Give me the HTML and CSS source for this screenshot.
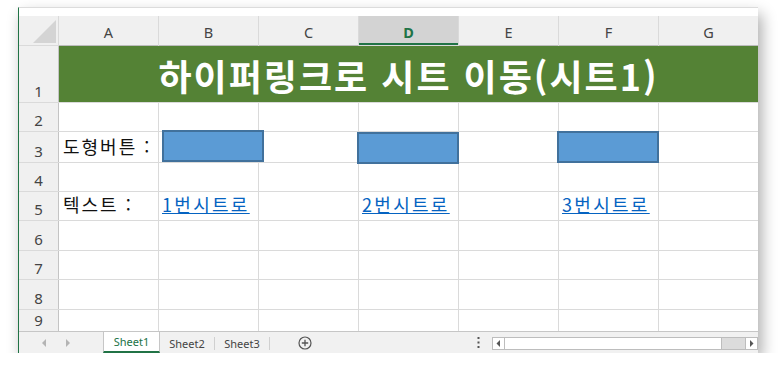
FILE: index.html
```html
<!DOCTYPE html>
<html lang="ko">
<head>
    <meta charset="UTF-8">
    <title>하이퍼링크로 시트 이동</title>
    <link rel="stylesheet" href="styles.css">
</head>
<body>

<div class="window">
    <div class="top-gap"></div>

    <!-- 시트 격자 -->
    <div class="sheet">
        <div class="corner">
            <svg width="39" height="29" viewBox="0 0 39 29"><polygon points="14,27 37,4 37,27" fill="#d4d4d4"/></svg>
        </div>
        <div class="col-head">A</div>
        <div class="col-head">B</div>
        <div class="col-head">C</div>
        <div class="col-head selected">D</div>
        <div class="col-head">E</div>
        <div class="col-head">F</div>
        <div class="col-head">G</div>

        <div class="row-head">1</div>
        <div class="title">하이퍼링크로 시트 이동(시트1)</div>

        <div class="row-head">2</div>
        <div class="cell"></div><div class="cell"></div><div class="cell"></div><div class="cell"></div><div class="cell"></div><div class="cell"></div><div class="cell"></div>

        <div class="row-head">3</div>
        <div class="cell label">도형버튼 :</div><div class="cell"></div><div class="cell"></div><div class="cell"></div><div class="cell"></div><div class="cell"></div><div class="cell"></div>

        <div class="row-head">4</div>
        <div class="cell"></div><div class="cell"></div><div class="cell"></div><div class="cell"></div><div class="cell"></div><div class="cell"></div><div class="cell"></div>

        <div class="row-head">5</div>
        <div class="cell label">텍스트 :</div>
        <div class="cell"><a class="link" href="#">1번시트로</a></div>
        <div class="cell"></div>
        <div class="cell"><a class="link" href="#">2번시트로</a></div>
        <div class="cell"></div>
        <div class="cell"><a class="link" href="#">3번시트로</a></div>
        <div class="cell"></div>

        <div class="row-head">6</div>
        <div class="cell"></div><div class="cell"></div><div class="cell"></div><div class="cell"></div><div class="cell"></div><div class="cell"></div><div class="cell"></div>

        <div class="row-head">7</div>
        <div class="cell"></div><div class="cell"></div><div class="cell"></div><div class="cell"></div><div class="cell"></div><div class="cell"></div><div class="cell"></div>

        <div class="row-head">8</div>
        <div class="cell"></div><div class="cell"></div><div class="cell"></div><div class="cell"></div><div class="cell"></div><div class="cell"></div><div class="cell"></div>

        <div class="row-head">9</div>
        <div class="cell"></div><div class="cell"></div><div class="cell"></div><div class="cell"></div><div class="cell"></div><div class="cell"></div><div class="cell"></div>

        <!-- 도형 버튼 (셀 위에 떠 있음) -->
        <div class="shape shape-1"></div>
        <div class="shape shape-2"></div>
        <div class="shape shape-3"></div>
    </div>

    <!-- 시트 탭 -->
    <div class="tab-bar">
        <div class="nav">
            <svg width="6" height="8" viewBox="0 0 6 8"><polygon points="5,0 5,8 1,4" fill="#b4b4b4"/></svg>
            <svg width="6" height="8" viewBox="0 0 6 8"><polygon points="1,0 1,8 5,4" fill="#b4b4b4"/></svg>
        </div>
        <div class="tab active">Sheet1</div>
        <div class="tab">Sheet2</div>
        <div class="tab">Sheet3</div>
        <div class="add">
            <svg width="14" height="14" viewBox="0 0 14 14"><circle cx="7" cy="7" r="6" fill="none" stroke="#555" stroke-width="1.2"/><path d="M7 3.8v6.4M3.8 7h6.4" stroke="#555" stroke-width="1.3"/></svg>
        </div>
        <div class="dots">
            <svg width="3" height="11" viewBox="0 0 3 11"><rect x="0.5" y="0" width="2" height="2" fill="#555"/><rect x="0.5" y="4.5" width="2" height="2" fill="#555"/><rect x="0.5" y="9" width="2" height="2" fill="#555"/></svg>
        </div>
        <div class="scrollbar">
            <div class="sb-btn">
                <svg width="5" height="7" viewBox="0 0 5 7"><polygon points="4,0 4,7 0.5,3.5" fill="#555"/></svg>
            </div>
            <div class="sb-thumb"></div>
            <div class="sb-track"></div>
            <div class="sb-btn">
                <svg width="5" height="7" viewBox="0 0 5 7"><polygon points="1,0 1,7 4.5,3.5" fill="#555"/></svg>
            </div>
        </div>
    </div>
</div>

</body>
</html>
```

FILE: styles.css
```css
body {
    margin: 0;
    background-color: #fff;
    font-family: "Noto Sans", "Noto Sans CJK KR", sans-serif;
}
.window {
    margin: 7px 0 0 18px;
    width: 739px;
    height: 345px;
    border-left: 1px solid #217346;
    border-top: 1px solid #dcdcdc;
    background-color: #fff;
    box-shadow: 4px 7px 14px rgba(0,0,0,0.32);
    overflow: hidden;
    display: flex;
    flex-direction: column;
}
.top-gap {
    height: 8px;
    flex: none;
}
.sheet {
    position: relative;
    flex: none;
    height: 315px;
    overflow: hidden;
    display: grid;
    grid-template-columns: 39px repeat(7, 99px);
    grid-template-rows: 29px 56px 28px 30px 28px 28px 29px 28px 29px 21px;
    gap: 1px;
    background-color: #dadada;
}
.corner {
    background-color: #f0f0f0;
}
.corner svg {
    display: block;
}
.col-head {
    background-color: #f0f0f0;
    box-shadow: 0 1px 0 #bcbcbc;
    color: #444;
    font-size: 14.5px;
    display: flex;
    align-items: center;
    justify-content: center;
    padding-top: 2px;
}
.col-head.selected {
    background-color: #d3d3d3;
    box-shadow: inset 0 -2px 0 #217346;
    color: #217346;
    font-weight: bold;
}
.row-head {
    background-color: #f0f0f0;
    box-shadow: 1px 0 0 #c4c4c4;
    color: #444;
    font-size: 15px;
    display: flex;
    align-items: flex-end;
    justify-content: center;
    padding-bottom: 1px;
}
.title {
    grid-column: 2 / span 7;
    background-color: #548235;
    color: #fff;
    font-family: "Noto Sans CJK KR", sans-serif;
    font-weight: bold;
    font-size: 36px;
    letter-spacing: 2px;
    display: flex;
    align-items: center;
    justify-content: center;
    padding-top: 1px;
}
.cell {
    background-color: #fff;
    display: flex;
    align-items: flex-end;
    padding: 0 0 3px 3px;
    font-family: "Noto Sans CJK KR", sans-serif;
    font-size: 18px;
    letter-spacing: 2px;
    color: #111;
    white-space: nowrap;
}
.cell.label {
    padding-left: 4px;
}
.link {
    color: #0563c1;
    text-decoration: underline;
    letter-spacing: 2.3px;
}
.shape {
    position: absolute;
    width: 102px;
    height: 32px;
    box-sizing: border-box;
    background-color: #5b9bd5;
    border: 2px solid #41719c;
}
.shape-1 { left: 143px; top: 114px; }
.shape-2 { left: 338px; top: 116px; }
.shape-3 { left: 538px; top: 115px; }

.tab-bar {
    flex: none;
    height: 21px;
    border-top: 1px solid #c6c6c6;
    background-color: #f1f1f1;
    display: flex;
    align-items: stretch;
    font-size: 11px;
    color: #444;
}
.nav {
    width: 84px;
    display: flex;
    align-items: center;
    gap: 18px;
    padding-left: 22px;
    box-sizing: border-box;
}
.tab {
    width: 55px;
    box-sizing: border-box;
    display: flex;
    align-items: center;
    justify-content: center;
    border-right: 1px solid #d0d0d0;
    margin: 5px 0 3px;
}
.tab.active {
    margin: 0;
    width: 57px;
    background-color: #fff;
    color: #217346;
    border-left: 1px solid #c6c6c6;
    border-right: 1px solid #c6c6c6;
    border-bottom: 2px solid #217346;
}
.add {
    display: flex;
    align-items: center;
    margin-left: 28px;
}
.dots {
    display: flex;
    align-items: center;
    margin-left: 165px;
}
.scrollbar {
    display: flex;
    height: 13px;
    margin: 5px 0 0 12px;
    border: 1px solid #bdbdbd;
    box-sizing: border-box;
    flex: 1;
}
.sb-btn {
    width: 11px;
    display: flex;
    align-items: center;
    justify-content: center;
    background-color: #fff;
    border-right: 1px solid #bdbdbd;
}
.sb-btn:last-child {
    border-right: none;
    border-left: 1px solid #bdbdbd;
}
.sb-thumb {
    width: 216px;
    background-color: #fff;
    border-right: 1px solid #bdbdbd;
}
.sb-track {
    flex: 1;
    background-color: #dcdcdc;
}
```
